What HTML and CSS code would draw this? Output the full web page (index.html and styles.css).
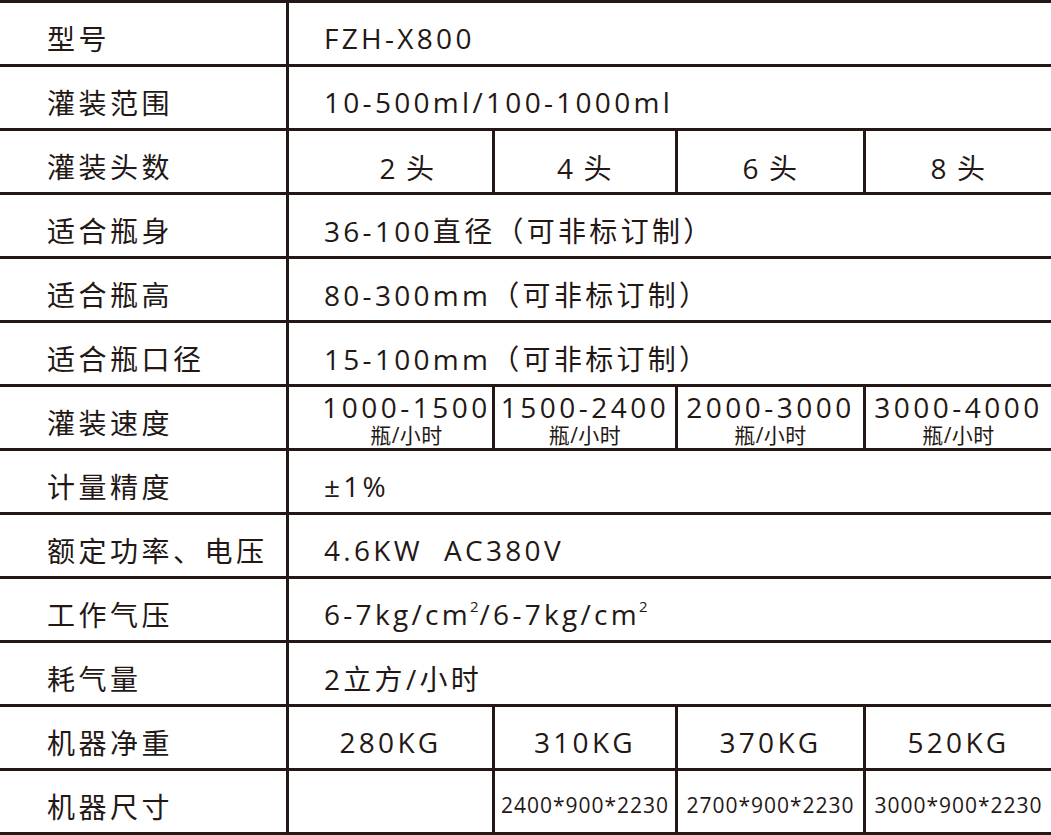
FILE: index.html
```html
<!DOCTYPE html>
<html lang="zh-CN">
<head>
<meta charset="utf-8">
<title>FZH-X800 参数</title>
<link rel="stylesheet" href="styles.css">
</head>
<body>
<div class="spec">
  <div class="row"><div class="label">型号</div><div class="cell wide">FZH-X800</div></div>
  <div class="row"><div class="label">灌装范围</div><div class="cell wide">10-500ml/100-1000ml</div></div>
  <div class="row">
    <div class="label">灌装头数</div>
    <div class="cell head first">2 头</div>
    <div class="cell head">4 头</div>
    <div class="cell head">6 头</div>
    <div class="cell head">8 头</div>
  </div>
  <div class="row"><div class="label">适合瓶身</div><div class="cell wide">36-100直径（可非标订制）</div></div>
  <div class="row"><div class="label">适合瓶高</div><div class="cell wide">80-300mm（可非标订制）</div></div>
  <div class="row"><div class="label">适合瓶口径</div><div class="cell wide">15-100mm（可非标订制）</div></div>
  <div class="row">
    <div class="label">灌装速度</div>
    <div class="cell speed first"><span class="num">1000-1500</span><span class="unit">瓶/小时</span></div>
    <div class="cell speed"><span class="num">1500-2400</span><span class="unit">瓶/小时</span></div>
    <div class="cell speed"><span class="num">2000-3000</span><span class="unit">瓶/小时</span></div>
    <div class="cell speed"><span class="num">3000-4000</span><span class="unit">瓶/小时</span></div>
  </div>
  <div class="row"><div class="label">计量精度</div><div class="cell wide">±1%</div></div>
  <div class="row"><div class="label">额定功率、电压</div><div class="cell wide">4.6KW&nbsp;&nbsp;AC380V</div></div>
  <div class="row"><div class="label">工作气压</div><div class="cell wide"><span>6-7kg/cm<span class="sq">2</span>/6-7kg/cm<span class="sq">2</span></span></div></div>
  <div class="row"><div class="label">耗气量</div><div class="cell wide">2立方/小时</div></div>
  <div class="row">
    <div class="label">机器净重</div>
    <div class="cell">280KG</div>
    <div class="cell">310KG</div>
    <div class="cell">370KG</div>
    <div class="cell">520KG</div>
  </div>
  <div class="row last">
    <div class="label">机器尺寸</div>
    <div class="cell"></div>
    <div class="cell dim">2400*900*2230</div>
    <div class="cell dim">2700*900*2230</div>
    <div class="cell dim">3000*900*2230</div>
  </div>
</div>
</body>
</html>
```

FILE: styles.css
```css
html, body {
  margin: 0;
  padding: 0;
  background: #ffffff;
}

.spec {
  width: 1051px;
  color: #231815;
  font-family: "Open Sans", "Noto Sans CJK SC", sans-serif;
  font-size: 28px;
  letter-spacing: 3.3px;
}

.row {
  display: grid;
  grid-template-columns: 286px 206px 183px 188px 188px;
  height: 64px;
  box-sizing: border-box;
  border-top: 3px solid #231815;
}

.row.last {
  height: 67px;
  border-bottom: 3px solid #231815;
}

.label {
  display: flex;
  align-items: center;
  padding: 9px 0 0 47px;
  white-space: nowrap;
  letter-spacing: 3.5px;
}

.cell {
  display: flex;
  align-items: center;
  justify-content: center;
  border-left: 3px solid #231815;
  padding-top: 9px;
  white-space: nowrap;
}

.cell.wide {
  grid-column: 2 / 6;
  justify-content: flex-start;
  padding-left: 35px;
}

.cell.head {
  letter-spacing: 1.5px;
  padding-top: 11px;
}

.cell.first {
  padding-left: 34px;
}

.cell.speed {
  flex-direction: column;
  justify-content: flex-end;
  padding-top: 0;
  padding-bottom: 1px;
}

.cell.speed.first {
  padding-left: 32px;
}

.num {
  line-height: 32px;
  display: block;
  letter-spacing: 3.5px;
}

.unit {
  font-size: 21px;
  letter-spacing: 0.5px;
  line-height: 24px;
  display: block;
}

.dim {
  font-size: 21px;
  letter-spacing: 1px;
  padding-top: 7px;
}

.sq {
  display: inline-block;
  font-size: 15px;
  line-height: 15px;
  letter-spacing: 0;
  transform: translateY(-13px);
  margin-left: -1px;
  margin-right: 1px;
}
```
